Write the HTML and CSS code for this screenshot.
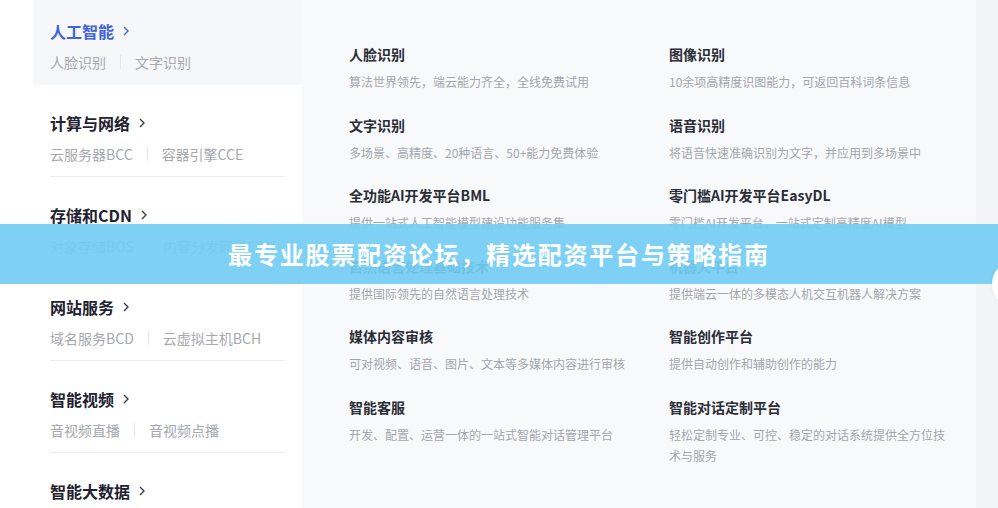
FILE: index.html
```html
<!DOCTYPE html>
<html lang="zh-CN">
<head>
<meta charset="utf-8">
<title>产品导航</title>
<link rel="stylesheet" href="styles.css">
</head>
<body>
<div class="page">
  <div class="gutter"></div>
  <nav class="nav">
    <div class="nav-item active">
      <div class="nav-inner">
        <div class="nav-title">人工智能<svg class="chev" viewBox="0 0 6 10" width="6" height="10"><polyline points="1,1 5,5 1,9" fill="none" stroke="currentColor" stroke-width="1.4"/></svg></div>
        <div class="nav-sub"><span>人脸识别</span><i class="sep"></i><span>文字识别</span></div>
      </div>
    </div>
    <div class="nav-item">
      <div class="nav-inner">
        <div class="nav-title">计算与网络<svg class="chev" viewBox="0 0 6 10" width="6" height="10"><polyline points="1,1 5,5 1,9" fill="none" stroke="currentColor" stroke-width="1.4"/></svg></div>
        <div class="nav-sub"><span>云服务器BCC</span><i class="sep"></i><span>容器引擎CCE</span></div>
      </div>
    </div>
    <div class="nav-item">
      <div class="nav-inner">
        <div class="nav-title">存储和CDN<svg class="chev" viewBox="0 0 6 10" width="6" height="10"><polyline points="1,1 5,5 1,9" fill="none" stroke="currentColor" stroke-width="1.4"/></svg></div>
        <div class="nav-sub"><span>对象存储BOS</span><i class="sep"></i><span>内容分发网络CDN</span></div>
      </div>
    </div>
    <div class="nav-item">
      <div class="nav-inner">
        <div class="nav-title">网站服务<svg class="chev" viewBox="0 0 6 10" width="6" height="10"><polyline points="1,1 5,5 1,9" fill="none" stroke="currentColor" stroke-width="1.4"/></svg></div>
        <div class="nav-sub"><span>域名服务BCD</span><i class="sep"></i><span>云虚拟主机BCH</span></div>
      </div>
    </div>
    <div class="nav-item">
      <div class="nav-inner">
        <div class="nav-title">智能视频<svg class="chev" viewBox="0 0 6 10" width="6" height="10"><polyline points="1,1 5,5 1,9" fill="none" stroke="currentColor" stroke-width="1.4"/></svg></div>
        <div class="nav-sub"><span>音视频直播</span><i class="sep"></i><span>音视频点播</span></div>
      </div>
    </div>
    <div class="nav-item">
      <div class="nav-inner">
        <div class="nav-title">智能大数据<svg class="chev" viewBox="0 0 6 10" width="6" height="10"><polyline points="1,1 5,5 1,9" fill="none" stroke="currentColor" stroke-width="1.4"/></svg></div>
        <div class="nav-sub"><span>数据仓库</span><i class="sep"></i><span>数据可视化</span></div>
      </div>
    </div>
  </nav>
  <main class="panel">
    <div class="grid">
      <div class="card"><div class="card-title">人脸识别</div><div class="card-desc">算法世界领先，端云能力齐全，全线免费试用</div></div>
      <div class="card"><div class="card-title">图像识别</div><div class="card-desc">10余项高精度识图能力，可返回百科词条信息</div></div>
      <div class="card"><div class="card-title">文字识别</div><div class="card-desc">多场景、高精度、20种语言、50+能力免费体验</div></div>
      <div class="card"><div class="card-title">语音识别</div><div class="card-desc">将语音快速准确识别为文字，并应用到多场景中</div></div>
      <div class="card"><div class="card-title">全功能AI开发平台BML</div><div class="card-desc">提供一站式人工智能模型建设功能服务集</div></div>
      <div class="card"><div class="card-title">零门槛AI开发平台EasyDL</div><div class="card-desc">零门槛AI开发平台，一站式定制高精度AI模型</div></div>
      <div class="card"><div class="card-title">自然语言处理基础技术</div><div class="card-desc">提供国际领先的自然语言处理技术</div></div>
      <div class="card"><div class="card-title">机器人平台</div><div class="card-desc">提供端云一体的多模态人机交互机器人解决方案</div></div>
      <div class="card"><div class="card-title">媒体内容审核</div><div class="card-desc">可对视频、语音、图片、文本等多媒体内容进行审核</div></div>
      <div class="card"><div class="card-title">智能创作平台</div><div class="card-desc">提供自动创作和辅助创作的能力</div></div>
      <div class="card"><div class="card-title">智能客服</div><div class="card-desc">开发、配置、运营一体的一站式智能对话管理平台</div></div>
      <div class="card"><div class="card-title">智能对话定制平台</div><div class="card-desc">轻松定制专业、可控、稳定的对话系统提供全方位技术与服务</div></div>
    </div>
  </main>
  <div class="strip"></div>
</div>
<div class="banner">最专业股票配资论坛，精选配资平台与策略指南</div>
<div class="bubble"></div>
</body>
</html>
```
FILE: styles.css
```css
* { box-sizing: border-box; }
html, body {
  margin: 0;
  padding: 0;
  width: 998px;
  height: 508px;
  overflow: hidden;
  background: #ffffff;
  font-family: "Noto Sans CJK SC", "Noto Sans", sans-serif;
}
.page {
  display: flex;
  height: 508px;
}
.gutter {
  width: 33px;
  flex: none;
  background: #ffffff;
}
.nav {
  width: 269px;
  flex: none;
  background: #ffffff;
}
.nav-item {
  padding: 0 17px;
}
.nav-item.active {
  background: #f6f7f9;
}
.nav-inner {
  height: 92px;
  padding-top: 26px;
  border-bottom: 1px solid #ebedf0;
}
.nav-item:first-child .nav-inner {
  height: 85px;
  padding-top: 19px;
  border-bottom-color: transparent;
}
.nav-title {
  display: flex;
  align-items: center;
  height: 24px;
  font-size: 16px;
  font-weight: 700;
  color: #1f2230;
  line-height: 24px;
}
.active .nav-title {
  color: #4263d8;
}
.chev {
  margin-left: 9px;
  color: #3a3d48;
}
.active .chev {
  color: #4263d8;
}
.nav-sub {
  display: flex;
  align-items: center;
  margin-top: 8px;
  height: 22px;
  font-size: 14px;
  line-height: 22px;
  color: #a6a8ae;
}
.sep {
  display: block;
  width: 1px;
  height: 14px;
  margin: 0 14px;
  background: #e6e7ea;
}
.panel {
  flex: 1;
  background: #f8f9fb;
  padding: 44px 0 0 47px;
}
.grid {
  display: grid;
  grid-template-columns: 280px 280px;
  column-gap: 40px;
  row-gap: 22.5px;
  align-items: start;
}
.card-title {
  font-size: 14px;
  font-weight: 600;
  line-height: 21px;
  color: #2a2d36;
}
.card-desc {
  margin-top: 6px;
  font-size: 12px;
  line-height: 21px;
  color: #a4a6ac;
}
.strip {
  width: 22px;
  flex: none;
  background: #f3f4f7;
}
.banner {
  position: absolute;
  left: 0;
  top: 224px;
  width: 998px;
  height: 60px;
  background: rgba(116, 205, 243, 0.93);
  color: #ffffff;
  font-size: 24px;
  font-weight: 700;
  letter-spacing: 1.8px;
  line-height: 60px;
  text-align: center;
  z-index: 2;
}
.bubble {
  position: absolute;
  left: 992px;
  top: 260px;
  width: 48px;
  height: 48px;
  border-radius: 50%;
  background: #ffffff;
  box-shadow: 0 0 4px rgba(0, 0, 0, 0.06);
  z-index: 3;
}
```
